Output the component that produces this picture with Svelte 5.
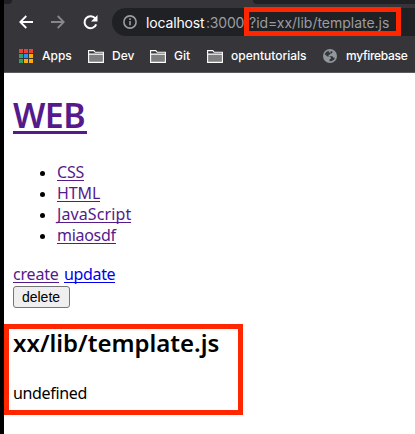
<script>
  const items = [
    { name: 'CSS', spacing: -0.2 },
    { name: 'HTML', spacing: -0.1 },
    { name: 'JavaScript', spacing: 0.1 },
    { name: 'miaosdf', spacing: -0.3 }
  ];
  const folders = [
    { name: 'Dev', cls: 'dev' },
    { name: 'Git', cls: 'git' },
    { name: 'opentutorials', cls: 'tutorials' }
  ];
  const dots = ['#ea4335', '#ea4335', '#ea4335', '#34a068', '#2e8cff', '#fbac08', '#34a068', '#fbac08', '#fbac08'];
</script>

<div class="window">
  <header>
    <div class="tabs"><i class="left"></i><i class="right"></i></div>
    <div class="toolbar">
      <svg class="back" width="14" height="14" viewBox="0 0 14 14"><path d="M14 7H1.5M7.3 1 1.3 7l6 6" /></svg>
      <svg class="forward" width="14" height="14" viewBox="0 0 14 14"><path d="M0 7h12.5M6.7 1l6 6-6 6" /></svg>
      <svg class="reload" width="15" height="15" viewBox="0 0 15 15">
        <path d="M12.4 3.7A6 6 0 1 0 13.2 9.3" /><path class="solid" d="M14.5 0v6.5H8z" />
      </svg>
      <div class="address">
        <svg width="14" height="14" viewBox="0 0 14 14"><circle cx="7" cy="7" r="6.1" /><path d="M7 6v4.3M7 3.3v1.6" /></svg>
        <span class="host">localhost</span><span class="port">:3000</span><span class="query">?id=xx/lib/template.js</span>
      </div>
    </div>
    <nav>
      <div class="apps">{#each dots as color}<i style:background={color}></i>{/each}</div>
      <span class="label apps-label">Apps</span>
      {#each folders as folder}
        <svg class="folder" width="16" height="13" viewBox="0 0 16 13">
          <path class="fill" d="M1 4h14v8H1z" />
          <path d="M.6 12.4V.6h5.2l1.4 1.7h8.2v10.1zM.6 4.1h14.8" />
        </svg>
        <span class="label {folder.cls}">{folder.name}</span>
      {/each}
      <svg class="globe" width="14" height="14" viewBox="0 0 14 14">
        <circle cx="7" cy="7" r="7" />
        <path d="M5.8 1.8C3.9 2.2 2.4 3.5 1.8 5.3L4.4 7.6h2.4l1 1v1.5H6.6v2.1c2.6.2 4.7-1.3 5.4-3.5h-1.5L9.4 7.3H5.6V5.8h1.5V4.4h1.6l1-1.4-.8-.8H7.6v1.2H5.8z" />
      </svg>
      <span class="label firebase">myfirebase</span>
    </nav>
    <div class="mark url-mark"></div>
  </header>
  <main>
    <h1><a href="/">WEB</a></h1>
    <ul>
      {#each items as item}
        <li><a href="/" style:letter-spacing="{item.spacing}px">{item.name}</a></li>
      {/each}
    </ul>
    <div class="actions"><a class="create" href="/">create</a><a class="update" href="/">update</a></div>
    <button>delete</button>
    <h2>xx/lib/template.js</h2>
    <p>undefined</p>
    <div class="mark body-mark"></div>
  </main>
</div>

<style>
  :global(body) { background: #000; overflow: hidden; }
  * { box-sizing: border-box; }
  .window { position: relative; width: 415px; height: 434px; padding-left: 4px; background: #000; color: #000; overflow: hidden; }
  svg { display: block; flex: none; }
  header { height: 73px; background: #36363a; border-bottom: 1px solid #5b5b5e; font-family: Inter, "Liberation Sans", sans-serif; }
  .tabs { height: 4px; display: flex; justify-content: space-between; }
  .tabs i { display: block; height: 4px; background: #202124; }
  .left { width: 8px; border-bottom-right-radius: 8px; }
  .right { width: 162px; border-bottom-left-radius: 8px; }
  .toolbar { height: 36px; display: flex; align-items: center; padding: 0 0 0 15px; }
  .toolbar > svg { fill: none; stroke: #fff; stroke-width: 1.8; }
  .toolbar .forward { margin-left: 18px; stroke: #88888b; }
  .toolbar .reload { margin-left: 18px; stroke-width: 2; }
  .toolbar .solid { fill: #fff; stroke: none; }
  .address { flex: 1; margin-left: 14px; height: 28px; border-radius: 14px 0 0 14px; background: #202124; display: flex; align-items: center; padding-left: 11px; font-size: 14px; color: #9a9da1; white-space: nowrap; }
  .address svg { fill: none; stroke: #9a9da1; stroke-width: 1.6; }
  .host { width: 60px; margin-left: 9px; color: #fff; letter-spacing: -.15px; }
  .port { width: 43px; letter-spacing: -.2px; }
  .query { letter-spacing: -.02px; }
  nav { height: 32px; display: flex; align-items: center; padding-left: 15px; }
  .apps { display: grid; grid-template-columns: repeat(3, 4px); gap: 1px; flex: none; }
  .apps i { height: 4px; }
  .label { flex: none; color: #fff; font-size: 12px; font-weight: 500; white-space: nowrap; line-height: 16px; }
  .apps-label { margin-left: 9px; width: 46px; }
  .folder { fill: none; stroke: #fff; stroke-width: 1.1; margin-top: 1px; }
  .folder .fill { fill: #7e7e80; stroke: none; }
  .dev { margin-left: 8px; width: 38px; }
  .git { margin-left: 8px; width: 33px; }
  .tutorials { margin-left: 8px; width: 92px; }
  .globe circle { fill: #90979d; }
  .globe path { fill: #36363a; }
  .firebase { margin-left: 9px; letter-spacing: -.3px; }
  main { height: 361px; background: #fff; padding: 21px 0 0 9px; font: 16px/21px "Noto Sans", sans-serif; }
  a { display: inline-block; color: #551a8b; text-decoration: none; white-space: nowrap; }
  h1 { margin: 0; height: 68px; font-size: 34px; line-height: 42px; font-weight: 600; }
  h1 a { height: 40px; width: 74px; border-bottom: 3px solid #551a8b; letter-spacing: -.6px; }
  ul { margin: 0; padding-left: 27px; list-style: none; }
  li { display: flex; height: 21px; }
  li::before { content: ""; width: 5px; height: 5px; margin: 9px 12px 0 0; border-radius: 50%; background: #000; }
  li a, .actions a { height: 19px; border-bottom: 1px solid; }
  .actions { display: flex; height: 22px; margin-top: 18px; letter-spacing: -.2px; }
  .actions .create { width: 46px; margin-right: 5px; }
  .actions .update { width: 51px; color: #00e; letter-spacing: -.35px; }
  button { display: block; width: 57px; height: 22px; margin: 0; padding: 0 1px 0 0; border: 1px solid #767676; border-radius: 3px; background: #efefef; color: #000; font: 14px "Liberation Sans", sans-serif; }
  h2 { margin: 20px 0 0; font-size: 24px; line-height: 30px; font-weight: 600; white-space: nowrap; }
  p { margin: 25px 0 0; line-height: 21px; letter-spacing: -.35px; }
  .mark { position: absolute; border: 5px solid #ff2600; }
  .url-mark { left: 244px; top: 7px; width: 157px; height: 29px; }
  .body-mark { left: 4px; top: 324px; width: 239px; height: 91px; }
</style>
